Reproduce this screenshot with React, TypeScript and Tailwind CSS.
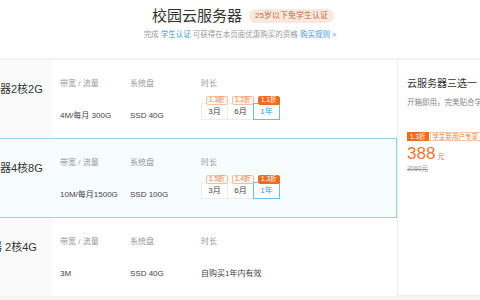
import React from 'react';

type Duration = { label: string; tag: string; active?: boolean };

type Plan = {
  name: string;
  shift: string;
  bandwidth: string;
  disk: string;
  durations?: Duration[];
  note?: string;
  selected?: boolean;
};

const plans: Plan[] = [
  {
    name: '器2核2G',
    shift: 'ml-0',
    bandwidth: '4M/每月 300G',
    disk: 'SSD 40G',
    durations: [
      { label: '3月', tag: '1.3折' },
      { label: '6月', tag: '1.2折' },
      { label: '1年', tag: '1.1折', active: true },
    ],
  },
  {
    name: '器4核8G',
    shift: 'ml-0',
    bandwidth: '10M/每月1500G',
    disk: 'SSD 100G',
    selected: true,
    durations: [
      { label: '3月', tag: '1.5折' },
      { label: '6月', tag: '1.4折' },
      { label: '1年', tag: '1.3折', active: true },
    ],
  },
  {
    name: '云服务器 2核4G',
    shift: 'ml-[-42px]',
    bandwidth: '3M',
    disk: 'SSD 40G',
    note: '自购买1年内有效',
  },
];

const DurationPicker = ({ items }: { items: Duration[] }) => (
  <div className="mt-[14px] flex">
    {items.map((d, i) => (
      <div
        key={d.label}
        className={`relative flex h-[17px] w-[27px] items-center justify-center border text-[8px] ${
          i > 0 ? '-ml-px' : ''
        } ${d.active ? 'z-10 border-[#6cbfe6] bg-white text-[#3d9ee0]' : 'border-[#ececec] bg-white text-[#444]'}`}
      >
        {d.label}
        <span
          className={`absolute left-[4px] top-[-8px] flex h-[9px] items-center whitespace-nowrap rounded-[2px] border px-[2px] text-[6.5px] leading-none ${
            d.active ? 'border-[#f26b1d] bg-[#f26b1d] text-white' : 'border-[#f5c09c] bg-[#fff6ef] text-[#ee8040]'
          }`}
        >
          {d.tag}
        </span>
      </div>
    ))}
  </div>
);

const PlanRow = ({ plan }: { plan: Plan }) => (
  <div
    className={`flex ${
      plan.selected ? 'h-[80px] border border-l-0 border-[#8fd5e6] bg-[#f7fcfe]' : 'h-[78px] bg-white'
    }`}
  >
    <div className={`w-[52px] shrink-0 overflow-hidden ${plan.selected ? '' : 'bg-[#fafafa]'}`}>
      <div className={`${plan.shift} whitespace-nowrap pt-[22px] text-[11px] leading-[14px] text-[#333]`}>
        {plan.name}
      </div>
    </div>
    <div className="flex pl-[8px] pt-[19px]">
      <div className="w-[70px]">
        <div className="text-[8px] leading-[10px] text-[#999]">带宽 / 流量</div>
        <div className="mt-[22px] whitespace-nowrap text-[8px] leading-[10px] text-[#444]">{plan.bandwidth}</div>
      </div>
      <div className="w-[71px]">
        <div className="text-[8px] leading-[10px] text-[#999]">系统盘</div>
        <div className="mt-[22px] text-[8px] leading-[10px] text-[#444]">{plan.disk}</div>
      </div>
      <div>
        <div className="text-[8px] leading-[10px] text-[#999]">时长</div>
        {plan.durations ? (
          <DurationPicker items={plan.durations} />
        ) : (
          <div className="mt-[22px] text-[8px] leading-[10px] text-[#444]">{plan.note}</div>
        )}
      </div>
    </div>
  </div>
);

export default function App() {
  return (
    <div className="h-[300px] w-[480px] overflow-hidden bg-white font-['Liberation_Sans','Noto_Sans_CJK_SC',sans-serif]">
      {/* Header */}
      <div className="flex h-[58px] flex-col items-center pt-[6px]">
        <div className="flex items-center gap-[7px] pl-[6px]">
          <h1 className="text-[15px] leading-[20px] text-[#333]">校园云服务器</h1>
          <span className="rounded-full bg-[#fbe8dd] px-[6px] text-[8px] leading-[14px] text-[#b8704c]">
            25岁以下免学生认证
          </span>
        </div>
        <p className="mt-[4px] text-[7.5px] leading-[10px] text-[#999]">
          完成 <span className="text-[#3d9ee0]">学生认证</span> 可获得在本页面优惠购买的资格{' '}
          <span className="text-[#3d9ee0]">购买规则 &gt;</span>
        </p>
      </div>
      <div className="h-[2px] bg-[#f3f3f3]" />

      {/* Body */}
      <div className="flex h-[236px] border-b border-[#eeeeee]">
        <div className="w-[397px] shrink-0">
          {plans.map((p) => (
            <PlanRow key={p.name} plan={p} />
          ))}
        </div>
        <div className="min-w-0 flex-1 overflow-hidden border-l border-[#eeeeee] pl-[9px] pt-[18px]">
          <div className="whitespace-nowrap text-[10px] leading-[12px] text-[#333]">云服务器三选一</div>
          <div className="mt-[8px] whitespace-nowrap text-[7.5px] leading-[10px] text-[#888]">
            开箱即用，完美贴合学生需求
          </div>
          <div className="mt-[24px] flex whitespace-nowrap text-[6.5px] leading-[9px]">
            <span className="bg-[#f26b1d] px-[3px] text-white">1.3折</span>
            <span className="ml-px border border-[#f7c6a6] px-[2px] leading-[7px] text-[#e8844c]">学生新用户专享</span>
          </div>
          <div className="mt-[4px] flex items-baseline text-[#f07434]">
            <span className="text-[17px] leading-[18px]">388</span>
            <span className="ml-[2px] text-[7px]">元</span>
          </div>
          <div className="mt-[2px] text-[6.5px] leading-[8px] text-[#999] line-through">3060元</div>
        </div>
      </div>
      <div className="h-[4px] bg-[#f5f5f5]" />
    </div>
  );
}
